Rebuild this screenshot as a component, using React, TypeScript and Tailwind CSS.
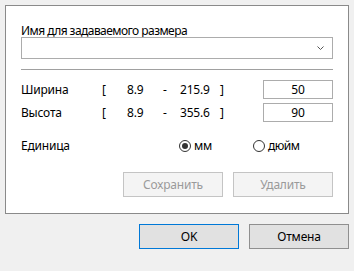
export default function App() {
  const font = { fontFamily: '"Noto Sans", "Segoe UI", sans-serif' }

  return (
    <div className="w-[354px] h-[271px] bg-[#f0f0f0] pt-[5px] text-[12px] text-black tracking-[-0.2px]" style={font}>
      {/* group panel */}
      <div className="mx-[5px] h-[209px] border border-[#8a8a8a] bg-white px-[15px] flex flex-col">
        <div className="mt-[18px] h-[13px] leading-[13px] whitespace-nowrap tracking-[-0.55px]">Имя для задаваемого размера</div>

        <div className="h-[22px] border border-[#acacac] bg-white flex items-center justify-end pr-[6px]">
          <svg width="7" height="4" viewBox="0 0 7 4" className="mr-[2px]">
            <path d="M0.5 0.5 L3.5 3.5 L6.5 0.5" fill="none" stroke="#555" strokeWidth="1" />
          </svg>
        </div>

        <div className="mt-[10px] h-px bg-[#a0a0a0]" />

        <div className="mt-[10px] flex flex-col gap-[4px]">
          <SizeRow label="Ширина" min="8.9" max="215.9" value="50" />
          <SizeRow label="Высота" min="8.9" max="355.6" value="90" />
        </div>

        <div className="mt-[14px] h-[19px] flex items-center">
          <span className="w-[158px]">Единица</span>
          <label className="flex items-center gap-[3px] w-[74px]">
            <span className="w-[12px] h-[12px] rounded-full border border-[#333] flex items-center justify-center">
              <span className="w-[6px] h-[6px] rounded-full bg-[#333]" />
            </span>
            мм
          </label>
          <label className="flex items-center gap-[3px] tracking-[-0.5px]">
            <span className="w-[12px] h-[12px] rounded-full border border-[#333]" />
            дюйм
          </label>
        </div>

        <div className="mt-[17px] flex justify-end gap-[10px]">
          <button className="w-[100px] h-[25px] border border-[#c4c4c4] bg-[#f4f4f4] text-[#9a9a9a]">Сохранить</button>
          <button className="w-[100px] h-[25px] border border-[#c4c4c4] bg-[#f4f4f4] text-[#9a9a9a]">Удалить</button>
        </div>
      </div>

      <div className="mt-[10px] mr-[5px] flex justify-end gap-[10px]">
        <button className="w-[100px] h-[25px] border border-[#0078d7] bg-[#e1e1e1]">OK</button>
        <button className="w-[100px] h-[25px] border border-[#8f8f8f] bg-[#e1e1e1]">Отмена</button>
      </div>
    </div>
  )
}

function SizeRow({ label, min, max, value }: { label: string; min: string; max: string; value: string }) {
  return (
    <div className="h-[19px] flex items-center">
      <span className="w-[81px]">{label}</span>
      <span className="w-[25px]">[</span>
      <span className="w-[36px]">{min}</span>
      <span className="w-[17px]">-</span>
      <span className="w-[40px]">{max}</span>
      <span className="flex-1">]</span>
      <div className="w-[70px] h-[19px] border border-[#acacac] flex items-center justify-center">{value}</div>
    </div>
  )
}
